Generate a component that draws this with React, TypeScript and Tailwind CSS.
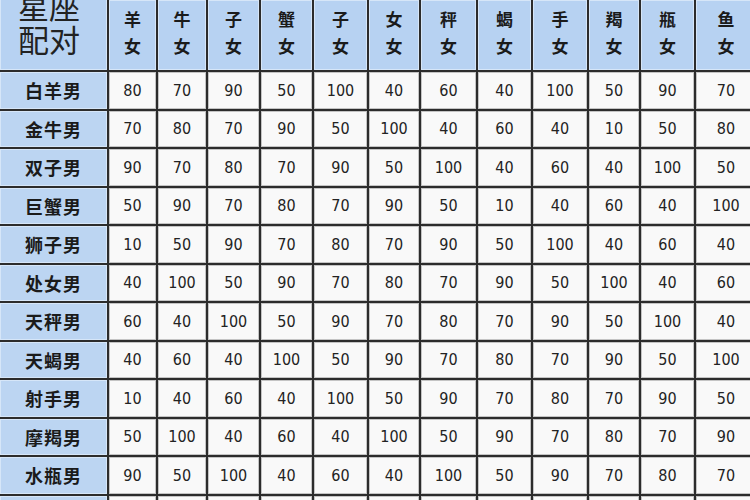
import { Fragment } from 'react';

const cols = ['羊', '牛', '子', '蟹', '子', '女', '秤', '蝎', '手', '羯', '瓶', '鱼'];

const rows: [string, number[]][] = [
  ['白羊男', [80, 70, 90, 50, 100, 40, 60, 40, 100, 50, 90, 70]],
  ['金牛男', [70, 80, 70, 90, 50, 100, 40, 60, 40, 10, 50, 80]],
  ['双子男', [90, 70, 80, 70, 90, 50, 100, 40, 60, 40, 100, 50]],
  ['巨蟹男', [50, 90, 70, 80, 70, 90, 50, 10, 40, 60, 40, 100]],
  ['狮子男', [10, 50, 90, 70, 80, 70, 90, 50, 100, 40, 60, 40]],
  ['处女男', [40, 100, 50, 90, 70, 80, 70, 90, 50, 100, 40, 60]],
  ['天秤男', [60, 40, 100, 50, 90, 70, 80, 70, 90, 50, 100, 40]],
  ['天蝎男', [40, 60, 40, 100, 50, 90, 70, 80, 70, 90, 50, 100]],
  ['射手男', [10, 40, 60, 40, 100, 50, 90, 70, 80, 70, 90, 50]],
  ['摩羯男', [50, 100, 40, 60, 40, 100, 50, 90, 70, 80, 70, 90]],
  ['水瓶男', [90, 50, 100, 40, 60, 40, 100, 50, 90, 70, 80, 70]],
  ['双鱼男', [70, 90, 50, 100, 40, 60, 40, 100, 50, 90, 70, 80]],
];

export default function App() {
  return (
    <div className="w-[750px] h-[500px] overflow-hidden bg-white font-['Noto_Sans_CJK_SC','Noto_Sans',sans-serif]">
      <div className="grid w-[810px] gap-[2px] bg-[#2c2c2c] grid-cols-[107px_47px_48px_51px_51px_53px_50px_55px_53px_54px_50px_53px_60px] grid-rows-[70px_37px_36px_37px_36px_37px_36px_37px_36px_37px_36px_37px_36px]">
        {/* corner: top line is cut by the page edge */}
        <div className="bg-[#b7d2f2] border border-[#d6e6f8] overflow-hidden flex flex-col pl-[17px] -mt-[16px] h-[86px] text-[31px] leading-[33px] text-[#222]">
          <span className="mt-[4px]">星座</span>
          <span>配对</span>
        </div>
        {cols.map((c, i) => (
          <div
            key={i}
            className="bg-[#b7d2f2] border border-[#d6e6f8] flex flex-col items-center justify-center pb-[6px] text-[17px] leading-[27px] font-bold text-[#1b1b1b]"
          >
            <span>{c}</span>
            <span>女</span>
          </div>
        ))}

        {rows.map(([label, vals]) => (
          <Fragment key={label}>
            <div className="bg-[#bcd5f2] border border-[#d6e6f8] flex items-center justify-center text-[18px] font-bold tracking-[1px] text-[#1b1b1b]">
              {label}
            </div>
            {vals.map((v, j) => (
              <div
                key={j}
                className="bg-[#f9f9f9] border border-[#c4c4c4] flex items-center justify-center text-[16px] text-[#232323] font-['DejaVu_Sans_Condensed','Liberation_Sans',sans-serif]"
              >
                {v}
              </div>
            ))}
          </Fragment>
        ))}
      </div>
    </div>
  );
}
